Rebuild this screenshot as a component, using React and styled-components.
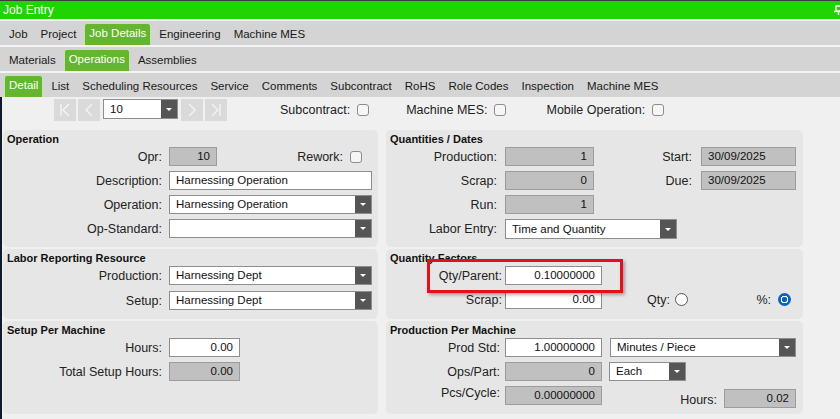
import styled, { createGlobalStyle, css } from 'styled-components';

const GlobalStyle = createGlobalStyle`
  html, body {
    margin: 0;
    padding: 0;
    background: #f0f0f0;
  }
  body {
    font-family: 'Liberation Sans', Arial, sans-serif;
  }
  * {
    box-sizing: border-box;
  }
`;

const Frame = styled.div`
  width: 840px;
  height: 419px;
  overflow: hidden;
  border-top: 1px solid #3c3c3c;
  background: #f0f0f0;
`;

const TitleBar = styled.div`
  height: 18px;
  background: #1fd400;
  color: #fff;
  font-size: 12px;
  line-height: 18px;
  padding-left: 3px;
  display: flex;
  align-items: center;
  justify-content: space-between;
  overflow: hidden;
`;

const PinIcon = styled.svg`
  width: 10px;
  height: 10px;
  margin-right: -4px;
  flex-shrink: 0;
`;

const TabRow = styled.div`
  height: 26px;
  border-top: 2px solid #f4f4f4;
  background: #d4d4d4;
  display: flex;
  align-items: flex-end;
  gap: 3px;
  padding-left: 4px;
`;

const Tab = styled.div`
  height: 22px;
  line-height: 22px;
  padding: 0 5px;
  font-size: 11.5px;
  color: #1a1a1a;
  white-space: nowrap;

  ${p =>
    p.$active &&
    css`
      background: #63b62d;
      color: #fff;
      border: 1px solid #c2e6a8;
      border-bottom: none;
      border-radius: 3px 3px 0 0;
      padding: 0 4px;
      line-height: 19px;
    `}
`;

const Content = styled.div`
  height: 322px;
  border-left: 2px solid #0d1b2a;
  padding-left: 1px;
`;

const NavRow = styled.div`
  height: 33px;
  display: flex;
  align-items: flex-start;
  padding: 2px 0 0 51px;
`;

const NavButton = styled.div`
  width: 22px;
  height: 22px;
  background: #dadada;
  margin-right: 2px;
  display: flex;
  align-items: center;
  justify-content: center;
`;

const NavCheck = styled.div`
  display: flex;
  align-items: center;
  height: 22px;
  margin-left: ${p => p.$ml}px;
  font-size: 12.5px;
  color: #222;
  gap: 7px;
`;

const CheckBox = styled.span`
  display: inline-block;
  width: 12px;
  height: 12px;
  border: 1px solid #8c8c8c;
  border-radius: 3px;
  background: #f6f6f6;
  flex-shrink: 0;
`;

const PanelGrid = styled.div`
  display: grid;
  grid-template-columns: 375px 417px;
  grid-template-rows: 117px 70px 93px;
  column-gap: 8px;
  row-gap: 2px;
`;

const Panel = styled.section`
  position: relative;
  background: #e6e6e6;
  border-radius: 5px;
  padding: 2px 4px 0;
`;

const PanelTitle = styled.div`
  height: 15px;
  font-size: 11px;
  line-height: 15px;
  font-weight: bold;
  color: #111;
`;

const Rows = styled.div`
  display: flex;
  flex-direction: column;
  gap: ${p => p.$gap ?? 5}px;
`;

const Row = styled.div`
  display: flex;
  align-items: ${p => p.$top ? 'flex-start' : 'center'};
  min-height: 19px;
`;

const Label = styled.div`
  width: ${p => p.$w}px;
  margin-right: ${p => p.$gap ?? 7}px;
  flex-shrink: 0;
  text-align: right;
  font-size: 12.5px;
  color: #222;
  white-space: nowrap;
`;

const Field = styled.div`
  width: ${p => p.$w}px;
  height: ${p => p.$h ?? 19}px;
  flex-shrink: 0;
  border: 1px solid ${p => (p.$readOnly ? '#9c9c9c' : '#8e8e8e')};
  background: ${p => (p.$readOnly ? '#c0c0c0' : '#fff')};
  font-size: 11.5px;
  line-height: ${p => (p.$h ?? 19) - 2}px;
  padding: 0 6px;
  text-align: ${p => p.$align || 'left'};
  color: #111;
  white-space: nowrap;
  overflow: hidden;
`;

const SelectBox = styled.div`
  width: ${p => p.$w}px;
  height: ${p => p.$h ?? 19}px;
  margin-left: ${p => p.$ml ?? 0}px;
  flex-shrink: 0;
  display: flex;
  border: 1px solid #8e8e8e;
  background: #fff;
  font-size: 11.5px;
  color: #111;
`;

const SelectText = styled.div`
  flex: 1;
  padding-left: 6px;
  line-height: ${p => (p.$h ?? 19) - 2}px;
  white-space: nowrap;
  overflow: hidden;
`;

const SelectArrow = styled.div`
  width: 16px;
  background: #555;
  display: flex;
  align-items: center;
  justify-content: center;

  &::after {
    content: '';
    border-left: 3px solid transparent;
    border-right: 3px solid transparent;
    border-top: 3px solid #fff;
  }
`;

const Radio = styled.span`
  display: inline-block;
  width: 13px;
  height: 13px;
  border-radius: 50%;
  flex-shrink: 0;
  ${p =>
    p.$checked
      ? css`
          background: radial-gradient(circle, #0b63c4 0 2.6px, #fff 3px 3.6px, #0b63c4 4px);
        `
      : css`
          border: 1px solid #555;
          background: #fff;
        `}
`;

const Highlight = styled.div`
  position: absolute;
  left: 41px;
  top: 10px;
  width: 196px;
  height: 34px;
  border: 3px solid #e3101c;
  box-shadow: 2px 2px 3px rgba(0, 0, 0, 0.3);
  pointer-events: none;
`;

const Select = ({ w, h, ml, children }) => (
  <SelectBox $w={w} $h={h} $ml={ml}>
    <SelectText $h={h}>{children}</SelectText>
    <SelectArrow />
  </SelectBox>
);

const NavIcon = ({ kind }) => {
  const c = '#f4f4f4';
  return (
    <svg width="14" height="16" viewBox="0 0 14 16" fill="none" stroke={c} strokeWidth="1.4">
      {kind === 'first' && (
        <>
          <line x1="3" y1="2" x2="3" y2="14" />
          <polyline points="11,2 5,8 11,14" />
        </>
      )}
      {kind === 'prev' && <polyline points="10,2 4,8 10,14" />}
      {kind === 'next' && <polyline points="4,2 10,8 4,14" />}
      {kind === 'last' && (
        <>
          <polyline points="3,2 9,8 3,14" />
          <line x1="11" y1="2" x2="11" y2="14" />
        </>
      )}
    </svg>
  );
};

const App = () => {
  return (
    <>
      <GlobalStyle />
      <Frame>
        <TitleBar>
          <span>Job Entry</span>
          <PinIcon viewBox="0 0 10 10" fill="none" stroke="#fff" strokeWidth="1.4">
            <rect x="2" y="1" width="5" height="5" />
            <line x1="0" y1="6.5" x2="10" y2="6.5" />
            <line x1="4.5" y1="6.5" x2="4.5" y2="10" />
          </PinIcon>
        </TitleBar>

        <TabRow>
          <Tab>Job</Tab>
          <Tab>Project</Tab>
          <Tab $active>Job Details</Tab>
          <Tab>Engineering</Tab>
          <Tab>Machine MES</Tab>
        </TabRow>
        <TabRow>
          <Tab>Materials</Tab>
          <Tab $active>Operations</Tab>
          <Tab>Assemblies</Tab>
        </TabRow>
        <TabRow>
          <Tab $active>Detail</Tab>
          <Tab>List</Tab>
          <Tab>Scheduling Resources</Tab>
          <Tab>Service</Tab>
          <Tab>Comments</Tab>
          <Tab>Subcontract</Tab>
          <Tab>RoHS</Tab>
          <Tab>Role Codes</Tab>
          <Tab>Inspection</Tab>
          <Tab>Machine MES</Tab>
        </TabRow>

        <Content>
          <NavRow>
            <NavButton><NavIcon kind="first" /></NavButton>
            <NavButton><NavIcon kind="prev" /></NavButton>
            <Select w={75} h={20} ml={1}>10</Select>
            <NavButton style={{ marginLeft: 3 }}><NavIcon kind="next" /></NavButton>
            <NavButton><NavIcon kind="last" /></NavButton>
            <NavCheck $ml={51}>Subcontract: <CheckBox /></NavCheck>
            <NavCheck $ml={37}>Machine MES: <CheckBox /></NavCheck>
            <NavCheck $ml={40}>Mobile Operation: <CheckBox /></NavCheck>
          </NavRow>

          <PanelGrid>
            <Panel>
              <PanelTitle>Operation</PanelTitle>
              <Rows>
                <Row>
                  <Label $w={155}>Opr:</Label>
                  <Field $w={48} $readOnly $align="right">10</Field>
                  <Label $w={126}>Rework:</Label>
                  <CheckBox />
                </Row>
                <Row>
                  <Label $w={155}>Description:</Label>
                  <Field $w={203}>Harnessing Operation</Field>
                </Row>
                <Row>
                  <Label $w={155}>Operation:</Label>
                  <Select w={203}>Harnessing Operation</Select>
                </Row>
                <Row>
                  <Label $w={155}>Op-Standard:</Label>
                  <Select w={203}></Select>
                </Row>
              </Rows>
            </Panel>

            <Panel>
              <PanelTitle>Quantities / Dates</PanelTitle>
              <Rows>
                <Row>
                  <Label $w={107} $gap={8}>Production:</Label>
                  <Field $w={89} $readOnly $align="right">1</Field>
                  <Label $w={98} $gap={9}>Start:</Label>
                  <Field $w={95} $readOnly>30/09/2025</Field>
                </Row>
                <Row>
                  <Label $w={107} $gap={8}>Scrap:</Label>
                  <Field $w={89} $readOnly $align="right">0</Field>
                  <Label $w={98} $gap={9}>Due:</Label>
                  <Field $w={95} $readOnly>30/09/2025</Field>
                </Row>
                <Row>
                  <Label $w={107} $gap={8}>Run:</Label>
                  <Field $w={89} $readOnly $align="right">1</Field>
                </Row>
                <Row>
                  <Label $w={107} $gap={8}>Labor Entry:</Label>
                  <Select w={172} h={20}>Time and Quantity</Select>
                </Row>
              </Rows>
            </Panel>

            <Panel>
              <PanelTitle>Labor Reporting Resource</PanelTitle>
              <Rows $gap={6}>
                <Row>
                  <Label $w={155}>Production:</Label>
                  <Select w={203}>Harnessing Dept</Select>
                </Row>
                <Row>
                  <Label $w={155}>Setup:</Label>
                  <Select w={203}>Harnessing Dept</Select>
                </Row>
              </Rows>
            </Panel>

            <Panel>
              <PanelTitle>Quantity Factors</PanelTitle>
              <Rows>
                <Row>
                  <Label $w={112} $gap={3}>Qty/Parent:</Label>
                  <Field $w={97} $align="right">0.10000000</Field>
                </Row>
                <Row>
                  <Label $w={112} $gap={3}>Scrap:</Label>
                  <Field $w={97} $align="right">0.00</Field>
                  <Label $w={68} $gap={5}>Qty:</Label>
                  <Radio />
                  <Label $w={83} $gap={7}>%:</Label>
                  <Radio $checked />
                </Row>
              </Rows>
              <Highlight />
            </Panel>

            <Panel>
              <PanelTitle>Setup Per Machine</PanelTitle>
              <Rows>
                <Row>
                  <Label $w={155}>Hours:</Label>
                  <Field $w={71} $align="right">0.00</Field>
                </Row>
                <Row>
                  <Label $w={155}>Total Setup Hours:</Label>
                  <Field $w={71} $readOnly $align="right">0.00</Field>
                </Row>
              </Rows>
            </Panel>

            <Panel>
              <PanelTitle>Production Per Machine</PanelTitle>
              <Rows>
                <Row>
                  <Label $w={110} $gap={5}>Prod Std:</Label>
                  <Field $w={97} $align="right">1.00000000</Field>
                  <Select w={186} ml={8}>Minutes / Piece</Select>
                </Row>
                <Row>
                  <Label $w={110} $gap={5}>Ops/Part:</Label>
                  <Field $w={97} $readOnly $align="right">0</Field>
                  <Select w={77} ml={7}>Each</Select>
                </Row>
                <Row $top>
                  <Label $w={110} $gap={5}>Pcs/Cycle:</Label>
                  <Field $w={97} $readOnly $align="right">0.00000000</Field>
                  <Label $w={115} $gap={7} style={{ marginTop: 7 }}>Hours:</Label>
                  <Field $w={72} $readOnly $align="right" style={{ marginTop: 3 }}>0.02</Field>
                </Row>
              </Rows>
            </Panel>
          </PanelGrid>
        </Content>
      </Frame>
    </>
  );
};

export default App;
